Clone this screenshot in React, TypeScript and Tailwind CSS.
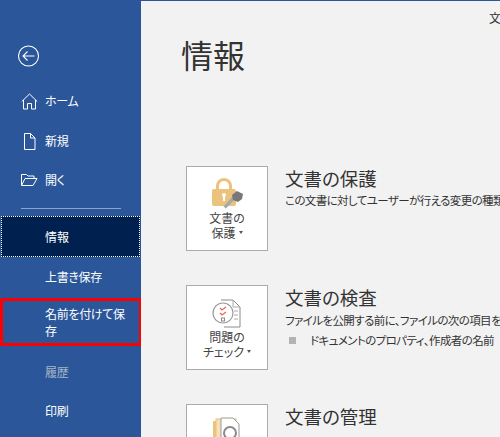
const font = '[font-family:"Noto_Sans_CJK_JP",sans-serif]';

function Nav({ icon, label, cls = "" }: { icon?: React.ReactNode; label: string; cls?: string }) {
  return (
    <div className={`flex items-center text-[12px] tracking-[-0.3px] text-white ${cls || "h-[40px]"}`}>
      <div className="w-[45px] shrink-0 flex justify-center pl-[20px] pr-[7px]">{icon}</div>
      <span>{label}</span>
    </div>
  );
}

function Card({ icon, l1, l2 }: { icon: React.ReactNode; l1: string; l2: string }) {
  return (
    <div className="w-[82px] h-[85px] shrink-0 bg-white border border-[#ababab] flex flex-col items-center pt-[11px] text-[12px] leading-[15px] text-[#444]">
      <div className="h-[31px] flex items-center justify-center">{icon}</div>
      <div className="mt-[1px]">{l1}</div>
      <div className="flex items-center">
        {l2}
        <span className="ml-[3px] w-0 h-0 border-x-[2.5px] border-x-transparent border-t-[3px] border-t-[#555]" />
      </div>
    </div>
  );
}

export default function App() {
  return (
    <div className={`w-[500px] h-[437px] overflow-hidden flex bg-[#2b579a] ${font} [font-feature-settings:"palt"]`}>
      <aside className="w-[141px] shrink-0 flex flex-col pt-[45px]">
        <div className="h-[22px] pl-[18px]">
          <svg width="22" height="22" viewBox="0 0 22 22" fill="none" stroke="#fff" strokeWidth="1.100">
            <circle cx="10.500" cy="11" r="10" />
            <path d="M5 11h11.500M9.500 6.500L5 11l4.500 4.500" />
          </svg>
        </div>
        <div className="mt-[14px]">
          <Nav
            label="ホーム"
            icon={
              <svg width="17" height="17" viewBox="0 0 17 17" fill="none" stroke="#fff" strokeWidth="1">
                <path d="M.8 8.500L8.500 1L16.200 8.500M2.500 7v9h4v-5.500h4V16h4V7" />
              </svg>
            }
          />
          <Nav
            label="新規"
            icon={
              <svg width="13" height="17" viewBox="0 0 13 17" fill="none" stroke="#fff" strokeWidth="1">
                <path d="M1.500.5h6l4.500 4.500v11.500H1.500zM7.500.5V5H12" />
              </svg>
            }
          />
          <div className="-mt-px">
            <Nav
              label="開く"
              icon={
                <svg width="17" height="12" viewBox="0 0 17 12" fill="none" stroke="#fff" strokeWidth="1">
                  <path d="M.5 11V.5h5l1.500 1.500h6v2.500M.5 11.500h11.500l4-7H4z" />
                </svg>
              }
            />
          </div>
        </div>
        <div className="ml-[21px] w-[100px] h-px bg-[#8aa5cb] mt-[8px]" />
        <div className="mt-[7px] h-[41px] ml-[1px] mr-px bg-[#002050] border border-dotted border-white flex items-center pl-[43px] text-[12px] text-white">
          情報
        </div>
        <Nav label="上書き保存" />
        <div className="h-[48px] mt-px border-[3px] border-[#ff0000] rounded-[2px] pl-[42px] pr-[8px] flex items-center text-[12px] tracking-[-0.3px] leading-[17px] text-white -mr-px">
          名前を付けて保存
        </div>
        <div className="mt-[6px]">
          <Nav label="履歴" cls="h-[39px] text-[#a9b4c6]!" />
          <Nav label="印刷" />
        </div>
      </aside>
      <main className="flex-1 min-w-0 mt-px bg-[#f2f2f2] text-[#444] overflow-hidden relative">
        <span className="absolute left-[348px] top-[9px] text-[12px] leading-[16px] text-[#333]">文</span>
        <h1 className="pl-[40px] pt-[31px] text-[32px] leading-[44px] text-[#333] font-normal">情報</h1>
        <div className="pl-[45px] pt-[90px] flex flex-col gap-[34px]">
          <section className="flex gap-[17px]">
            <Card
              l1="文書の"
              l2="保護"
              icon={
                <svg width="31" height="31" viewBox="0 0 31 31">
                  <path d="M5.500 13V8a6.500 6.500 0 0 1 13 0v5" fill="none" stroke="#ecc27f" strokeWidth="3" />
                  <rect x="0" y="11" width="24" height="17" rx="2" fill="#ecc27f" />
                  <circle cx="12" cy="17" r="2" fill="#fff" />
                  <rect x="11" y="17" width="2" height="6" fill="#fff" />
                  <path d="M11.500 28.500l9-10 2.500 2.500-9 9.500z" fill="#a8a8a8" />
                  <path d="M20 17l5-4 6 3-1 5-4 3-5-2z" fill="#777" />
                </svg>
              }
            />
            <div className="min-w-0 whitespace-nowrap">
              <h2 className="text-[18.500px] leading-[24px] text-[#333] font-normal">文書の保護</h2>
              <p className="text-[11.500px] tracking-[-0.6px] leading-[16px] mt-[2px] text-[#333]">この文書に対してユーザーが行える変更の種類を管理します。</p>
            </div>
          </section>
          <section className="flex gap-[17px]">
            <Card
              l1="問題の"
              l2="チェック"
              icon={
                <svg width="30" height="30" viewBox="0 0 30 30" fill="none">
                  <path d="M9 2h12l7 7v20H12" stroke="#8a8a8a" />
                  <path d="M21 2v7h7M22 13h4M22 17h4M22 21h4" stroke="#aaa" />
                  <circle cx="11" cy="15" r="10" fill="#fff" stroke="#9a9a9a" strokeWidth="1.200" />
                  <path d="M8 10l2 2 4-3M8 15l2 2 4-3" stroke="#e0694a" strokeWidth="1.200" />
                  <rect x="9.500" y="20" width="3" height="3" stroke="#8a8a8a" />
                </svg>
              }
            />
            <div className="min-w-0 whitespace-nowrap">
              <h2 className="text-[18.500px] leading-[24px] text-[#333] font-normal">文書の検査</h2>
              <p className="text-[11.500px] tracking-[-0.6px] leading-[16px] mt-[3px] text-[#333]">ファイルを公開する前に、ファイルの次の項目を確認します。</p>
              <div className="flex items-center mt-[4px] text-[11.500px] tracking-[-0.6px] leading-[16px] text-[#333]">
                <span className="w-[7px] h-[7px] bg-[#b3b3b3] ml-[4px] mr-[14px] shrink-0" />
                ドキュメントのプロパティ、作成者の名前
              </div>
            </div>
          </section>
          <section className="flex gap-[17px]">
            <div className="w-[82px] h-[85px] shrink-0 bg-white border border-[#ababab] flex justify-center pt-[12px]">
              <svg width="30" height="30" viewBox="0 0 30 30" fill="none">
                <rect x="1" y="4" width="20" height="26" fill="#ecc27f" />
                <rect x="4" y="2" width="20" height="28" fill="#f6e0b8" stroke="#ecc27f" />
                <path d="M9 1h12l6 6v23H9z" fill="#fff" stroke="#9a9a9a" />
                <circle cx="18" cy="16" r="6" fill="#fff" stroke="#8a8a8a" strokeWidth="2" />
              </svg>
            </div>
            <h2 className="text-[18.500px] leading-[24px] text-[#333] font-normal">文書の管理</h2>
          </section>
        </div>
      </main>
    </div>
  );
}
